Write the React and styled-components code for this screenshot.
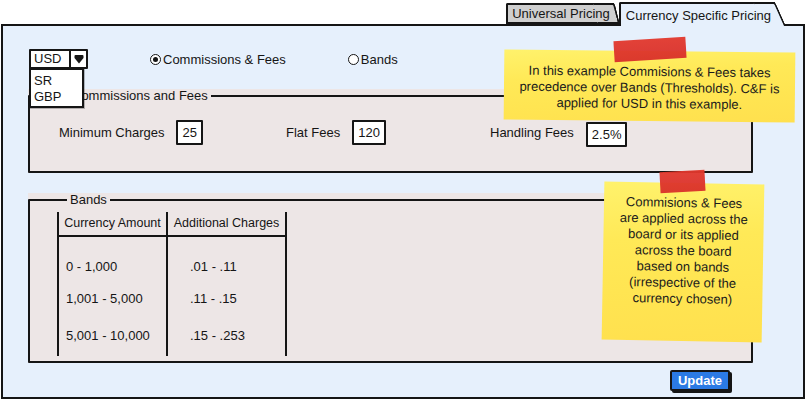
import React from "react";
import styled, { createGlobalStyle } from "styled-components";

const GlobalStyle = createGlobalStyle`
  html, body {
    margin: 0;
    padding: 0;
    background: #ffffff;
  }
  body {
    font-family: "Liberation Sans", Arial, sans-serif;
    font-size: 13px;
    color: #151515;
  }
`;

const Page = styled.div`
  position: relative;
  width: 807px;
  height: 401px;
  box-sizing: border-box;
  padding: 2px 2px 0 1px;
  overflow: hidden;
`;

const TabRow = styled.div`
  display: flex;
  justify-content: flex-end;
  align-items: flex-end;
  height: 22px;
  padding-right: 19px;
`;

const Tab = styled.div`
  position: relative;
  z-index: ${(p) => (p.$active ? 3 : 1)};
  box-sizing: border-box;
  height: ${(p) => (p.$active ? "24px" : "21px")};
  margin-bottom: ${(p) => (p.$active ? "-2px" : "0")};
  margin-right: ${(p) => p.$gap || "0"};
  padding: ${(p) => (p.$active ? "4px 4px 0 5px" : "1px 4px 0 4px")};
  background: ${(p) => (p.$active ? "#e6f0fc" : "#cfcfcf")};
  border: 2px solid #151515;
  border-right: none;
  border-bottom: ${(p) => (p.$active ? "none" : "2px solid #151515")};
  border-radius: 2px 0 0 0;
  font-size: 13px;
  line-height: 15px;
  white-space: nowrap;

  &::after {
    content: "";
    position: absolute;
    z-index: -1;
    top: -2px;
    bottom: ${(p) => (p.$active ? "0" : "-2px")};
    right: -${(p) => p.$lean || 10}px;
    width: 20px;
    background: inherit;
    border-top: 2px solid #151515;
    border-right: 2px solid #151515;
    border-bottom: ${(p) => (p.$active ? "none" : "2px solid #151515")};
    border-radius: 0 3px 0 0;
    transform-origin: bottom right;
    transform: skewX(${(p) => p.$skew || 24}deg);
  }
`;

const TabLabel = styled.span`
  position: relative;
`;

const Panel = styled.div`
  position: relative;
  z-index: 2;
  box-sizing: border-box;
  height: 375px;
  padding: 23px 0 0 25px;
  background: #e6f0fc;
  border: 2px solid #151515;
`;

const TopRow = styled.div`
  display: flex;
  align-items: center;
  gap: 62px;
  height: 20px;
  padding-left: 1px;
`;

const Select = styled.div`
  position: relative;
  display: flex;
  height: 20px;
  box-sizing: border-box;
  background: #fff;
  border: 2px solid #151515;
  border-radius: 1px;
`;

const SelectValue = styled.div`
  width: 35px;
  padding-left: 3px;
  line-height: 16px;
  font-size: 13px;
`;

const SelectArrow = styled.div`
  display: flex;
  align-items: center;
  justify-content: center;
  width: 15px;
  border-left: 2px solid #151515;
`;

const SelectList = styled.div`
  position: absolute;
  z-index: 4;
  top: 17px;
  left: -2px;
  width: 55px;
  height: 40px;
  box-sizing: border-box;
  padding: 3px 0 0 3px;
  background: #fff;
  border: 2px solid #151515;
  box-shadow: 1px 1px 0 rgba(0, 0, 0, 0.25);
`;

const ListItem = styled.div`
  font-size: 13px;
  line-height: 16px;
`;

const Radio = styled.label`
  display: flex;
  align-items: center;
  gap: 2px;
  font-size: 13px;
`;

const RadioDot = styled.span`
  display: flex;
  align-items: center;
  justify-content: center;
  width: 11px;
  height: 11px;
  box-sizing: border-box;
  border: 1.5px solid #151515;
  border-radius: 50%;
  background: #fff;

  &::after {
    content: "";
    display: ${(p) => (p.$checked ? "block" : "none")};
    width: 5px;
    height: 5px;
    border-radius: 50%;
    background: #151515;
  }
`;

const Group = styled.div`
  width: 725px;
  margin-top: ${(p) => p.$top || "20px"};
  background: #ede6e6;
`;

const Fieldset = styled.fieldset`
  box-sizing: border-box;
  height: ${(p) => p.$height};
  margin: 0;
  padding: ${(p) => p.$pad || "0"};
  min-width: 0;
  border: 2px solid #151515;
  border-radius: 1px;
`;

const Legend = styled.legend`
  margin-left: 10px;
  padding: 0 3px;
  font-size: 13px;
  line-height: 14px;
`;

const FieldRow = styled.div`
  display: flex;
  align-items: center;
  height: 27px;
`;

const Field = styled.div`
  display: flex;
  align-items: center;
  gap: 12px;
  width: ${(p) => p.$width || "auto"};
  font-size: 13px;
`;

const Input = styled.div`
  box-sizing: border-box;
  height: 25px;
  margin-top: ${(p) => p.$shift || "0"};
  padding: 0 4px;
  background: #fff;
  border: 2px solid #151515;
  border-radius: 1px;
  line-height: 21px;
  font-size: 13px;
`;

const Table = styled.div`
  display: flex;
`;

const Column = styled.div`
  width: ${(p) => p.$width};
  box-sizing: border-box;
  border-left: 2px solid #151515;
  border-right: ${(p) => (p.$last ? "2px solid #151515" : "none")};
`;

const HeadCell = styled.div`
  height: 25px;
  box-sizing: border-box;
  border-bottom: 2px solid #151515;
  text-align: center;
  line-height: 23px;
  font-size: 12.5px;
  white-space: nowrap;
`;

const ColumnBody = styled.div`
  padding-top: 13px;
`;

const Cell = styled.div`
  display: flex;
  align-items: center;
  height: ${(p) => p.$h}px;
  padding-left: ${(p) => p.$indent};
  font-size: 13px;
`;

const Footer = styled.div`
  display: flex;
  justify-content: flex-end;
  margin-top: 7px;
  padding-right: 73px;
`;

const Button = styled.button`
  height: 21px;
  padding: 0 6px;
  box-sizing: border-box;
  background: #2b7ae4;
  color: #fff;
  border: 2px solid #151515;
  border-radius: 2px;
  box-shadow: 2px 2px 0 #151515;
  font-family: "Liberation Sans", Arial, sans-serif;
  font-weight: 700;
  font-size: 13px;
  line-height: 16px;
`;

const Note = styled.div`
  position: absolute;
  z-index: 5;
  left: ${(p) => p.$x}px;
  top: ${(p) => p.$y}px;
  width: ${(p) => p.$w}px;
  height: ${(p) => p.$h}px;
  box-sizing: border-box;
  padding-top: ${(p) => p.$pad}px;
  background: linear-gradient(
    176deg,
    #fff26c 0%,
    #ffe957 35%,
    #ffe552 65%,
    #ffe04e 100%
  );
  transform: rotate(${(p) => p.$rot}deg);
  text-align: center;
  font-size: 13px;
  line-height: 16px;
  color: #1b1b1b;
`;

const NoteLine = styled.div`
  white-space: nowrap;
`;

const Tape = styled.div`
  position: absolute;
  z-index: 6;
  left: ${(p) => p.$x}px;
  top: ${(p) => p.$y}px;
  width: ${(p) => p.$w}px;
  height: ${(p) => p.$h}px;
  background: linear-gradient(180deg, #e2382d, #d9302a);
  opacity: 0.95;
  transform: rotate(${(p) => p.$rot}deg);
`;

const Arrow = () => (
  <svg width="10" height="9" viewBox="0 0 10 9">
    <path d="M0.5 1 Q0.5 0 1.5 0 H8.5 Q9.5 0 9.5 1 V3 L5 8.5 L0.5 3 Z" fill="#151515" />
  </svg>
);

const bands = [
  { amount: "0 - 1,000", charge: ".01 - .11", h: 32 },
  { amount: "1,001 - 5,000", charge: ".11 - .15", h: 32 },
  { amount: "5,001 - 10,000", charge: ".15 - .253", h: 42 },
];

const noteOne = [
  "In this example Commisions & Fees takes",
  "precedence over Bands (Thresholds). C&F is",
  "applied for USD in this example.",
];

const noteTwo = [
  "Commisions & Fees",
  "are applied across the",
  "board or its applied",
  "across the board",
  "based on bands",
  "(irrespective of the",
  "currency chosen)",
];

export default function App() {
  return (
    <Page>
      <GlobalStyle />
      <TabRow>
        <Tab $gap="5px" $lean={6} $skew={14}>
          <TabLabel>Universal Pricing</TabLabel>
        </Tab>
        <Tab $active $gap="11px" $lean={11}>
          <TabLabel>Currency Specific Pricing</TabLabel>
        </Tab>
      </TabRow>

      <Panel>
        <TopRow>
          <Select>
            <SelectValue>USD</SelectValue>
            <SelectArrow>
              <Arrow />
            </SelectArrow>
            <SelectList>
              <ListItem>SR</ListItem>
              <ListItem>GBP</ListItem>
            </SelectList>
          </Select>
          <Radio>
            <RadioDot $checked />
            Commissions &amp; Fees
          </Radio>
          <Radio>
            <RadioDot />
            Bands
          </Radio>
        </TopRow>

        <Group>
          <Fieldset $height="84px" $pad="16px 0 0 29px">
            <Legend>Commissions and Fees</Legend>
            <FieldRow>
              <Field $width="227px">
                Minimum Charges
                <Input>25</Input>
              </Field>
              <Field $width="204px">
                Flat Fees
                <Input>120</Input>
              </Field>
              <Field>
                Handling Fees
                <Input $shift="3px">2.5%</Input>
              </Field>
            </FieldRow>
          </Fieldset>
        </Group>

        <Group>
          <Fieldset $height="170px" $pad="5px 0 0 27px">
            <Legend>Bands</Legend>
            <Table>
              <Column $width="109px">
                <HeadCell>Currency Amount</HeadCell>
                <ColumnBody>
                  {bands.map((b) => (
                    <Cell key={b.amount} $h={b.h} $indent="7px">
                      {b.amount}
                    </Cell>
                  ))}
                </ColumnBody>
              </Column>
              <Column $width="121px" $last>
                <HeadCell>Additional Charges</HeadCell>
                <ColumnBody>
                  {bands.map((b) => (
                    <Cell key={b.charge} $h={b.h} $indent="22px">
                      {b.charge}
                    </Cell>
                  ))}
                </ColumnBody>
              </Column>
            </Table>
          </Fieldset>
        </Group>

        <Footer>
          <Button>Update</Button>
        </Footer>
      </Panel>

      <Note $x={504} $y={51} $w={291} $h={70} $pad={13} $rot={0.6}>
        {noteOne.map((line) => (
          <NoteLine key={line}>{line}</NoteLine>
        ))}
      </Note>
      <Tape $x={614} $y={39} $w={72} $h={21} $rot={-3.5} />

      <Note $x={603} $y={183} $w={160} $h={158} $pad={12} $rot={1}>
        {noteTwo.map((line) => (
          <NoteLine key={line}>{line}</NoteLine>
        ))}
      </Note>
      <Tape $x={660} $y={171} $w={45} $h={21} $rot={-3} />
    </Page>
  );
}
